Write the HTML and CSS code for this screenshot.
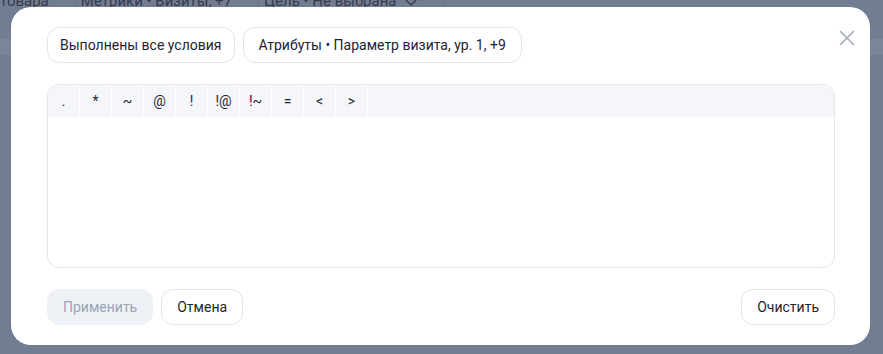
FILE: index.html
```html
<!DOCTYPE html>
<html lang="ru">
<head>
    <meta charset="UTF-8">
    <title>Условие сегмента</title>
    <link rel="stylesheet" href="styles.css">
</head>
<body>

    <!-- Page behind the overlay -->
    <div class="page">
        <div class="page-filters">
            <span class="page-filter">товара</span>
            <span class="page-filter">Метрики • Визиты, +7</span>
            <span class="page-filter">Цель • Не выбрана
                <svg class="chevron" width="14" height="8" viewBox="0 0 14 8">
                    <path d="M1 1L7 7L13 1" stroke="#2e3446" stroke-width="1.3" fill="none"/>
                </svg>
            </span>
        </div>
        <div class="page-band"></div>
    </div>

    <!-- Dialog -->
    <div class="modal">
        <button class="close" aria-label="Закрыть">
            <svg width="16" height="16" viewBox="0 0 16 16">
                <path d="M1 1L15 15M15 1L1 15" stroke="#a3aabb" stroke-width="1.6" fill="none"/>
            </svg>
        </button>

        <div class="chips">
            <button class="btn btn-chip">Выполнены все условия</button>
            <button class="btn">Атрибуты • Параметр визита, ур. 1, +9</button>
        </div>

        <div class="editor">
            <div class="toolbar">
                <span class="op">.</span>
                <span class="op">*</span>
                <span class="op">~</span>
                <span class="op">@</span>
                <span class="op">!</span>
                <span class="op">!@</span>
                <span class="op">!~</span>
                <span class="op">=</span>
                <span class="op">&lt;</span>
                <span class="op">&gt;</span>
            </div>
            <div class="editor-body"></div>
        </div>

        <div class="footer">
            <button class="btn btn-primary" disabled>Применить</button>
            <button class="btn">Отмена</button>
            <button class="btn btn-right">Очистить</button>
        </div>
    </div>

</body>
</html>
```

FILE: styles.css
```css
* {
    margin: 0;
    padding: 0;
    box-sizing: border-box;
}
body {
    font-family: Roboto, "Noto Sans", Arial, sans-serif;
    background-color: #737d92;
    color: #1f2433;
    width: 883px;
    height: 354px;
    overflow: hidden;
    position: relative;
}

/* Page behind overlay */
.page {
    height: 100%;
}
.page-filters {
    display: flex;
    margin-top: -9px;
    height: 20px;
}
.page-filter {
    color: #2e3446;
    font-size: 15px;
    line-height: 20px;
    padding: 0 26px 0 5px;
    border-right: 1px solid #687287;
    opacity: 0.9;
}
.page-filter:first-child {
    margin-left: -5px;
}
.chevron {
    margin-left: 4px;
    vertical-align: middle;
}
.page-band {
    margin-top: 28px;
    height: 16px;
    background-color: #7b8599;
}

/* Dialog */
.modal {
    position: absolute;
    left: 11px;
    top: 7px;
    width: 859px;
    height: 338px;
    background-color: #fff;
    border-radius: 20px;
    padding: 20px 35px 20px 36px;
    display: flex;
    flex-direction: column;
}
.close {
    position: absolute;
    top: 23px;
    right: 15px;
    width: 16px;
    height: 16px;
    border: none;
    background: none;
    cursor: pointer;
}
.close svg {
    display: block;
}

/* Buttons */
.btn {
    font-family: inherit;
    font-size: 14px;
    color: #1f2433;
    background-color: #fff;
    border: 1px solid #e2e5ee;
    border-radius: 12px;
    height: 36px;
    padding: 0 15px;
    cursor: pointer;
}
.btn-chip {
    padding: 0 12px;
}
.btn-primary {
    background-color: #eef1f6;
    border-color: #eef1f6;
    color: #9aa3b6;
    cursor: default;
}
.btn-right {
    margin-left: auto;
}

.chips {
    display: flex;
    gap: 8px;
}

/* Editor */
.editor {
    margin-top: 21px;
    height: 185px;
    border: 1px solid #e3e6ee;
    border-radius: 12px;
    overflow: hidden;
    display: flex;
    flex-direction: column;
}
.toolbar {
    display: flex;
    height: 32px;
    background-color: #f5f6fa;
    flex-shrink: 0;
}
.op {
    width: 32px;
    border-right: 1px solid #fff;
    display: flex;
    align-items: center;
    justify-content: center;
    font-size: 14px;
    color: #1f2433;
}
.editor-body {
    flex: 1;
}

.footer {
    margin-top: 21px;
    display: flex;
    gap: 8px;
}
```
